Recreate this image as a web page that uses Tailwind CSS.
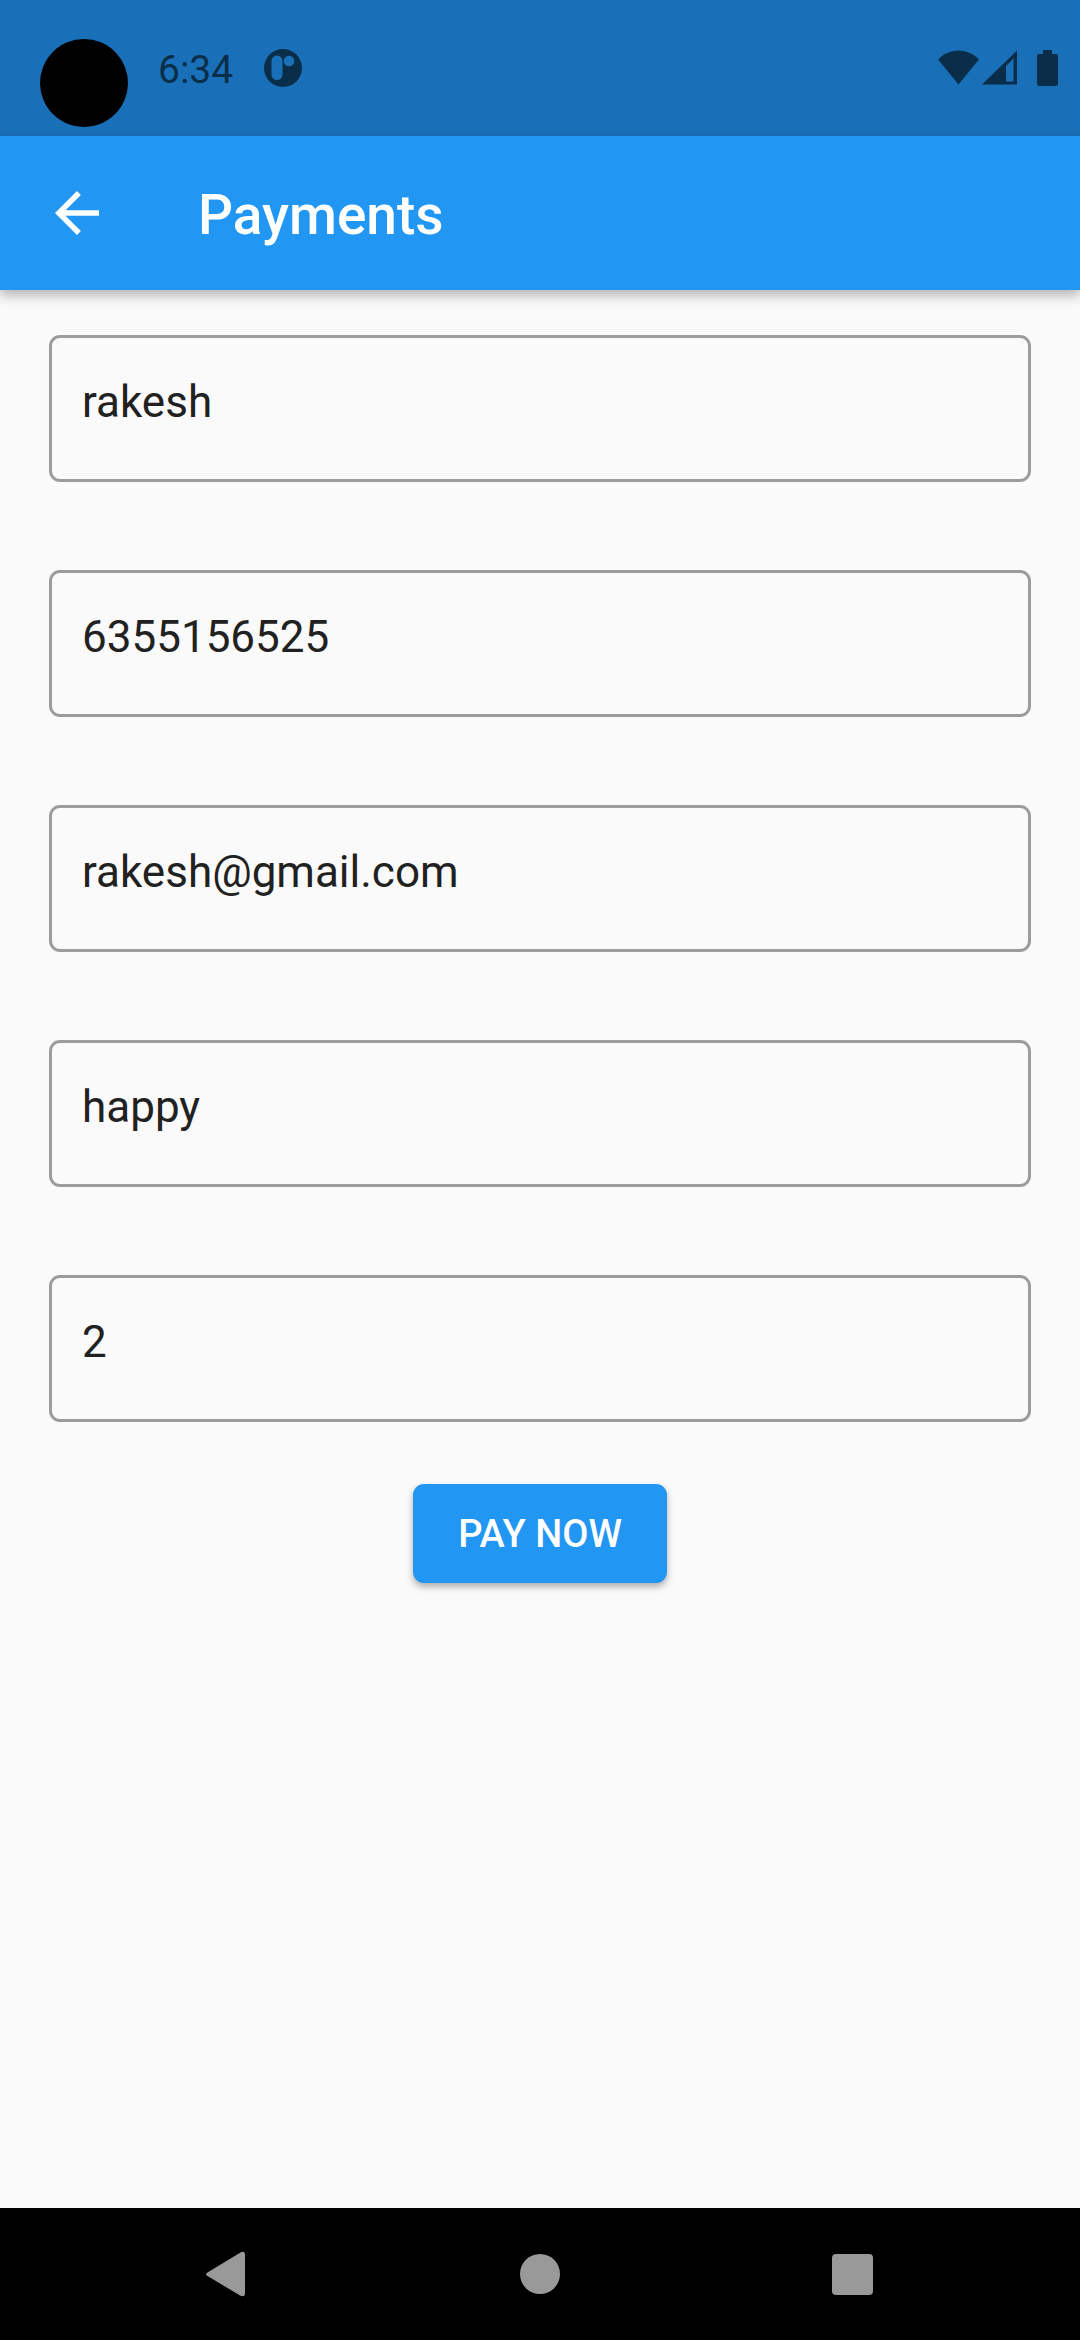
<!DOCTYPE html>
<html lang="en">
<head>
<meta charset="utf-8">
<meta name="viewport" content="width=device-width, initial-scale=1">
<title>Payments</title>
<script src="https://cdn.jsdelivr.net/npm/@tailwindcss/browser@4"></script>
</head>
<body class="flex min-h-screen flex-col bg-[#fafafa] font-['Roboto',sans-serif] text-[#212121]">

  <!-- Status bar -->
  <div class="flex h-[136px] items-center justify-between bg-[#1a70b8] pr-[22px] pl-10 text-[#0a2e4a]">
    <div class="flex items-center">
      <span class="mt-[30px] size-[88px] rounded-full bg-black"></span>
      <span class="ml-[30px] pt-1 text-[39px] leading-[46px]">6:34</span>
      <svg class="ml-[31px] size-[38px]" viewBox="0 0 38 38" aria-hidden="true">
        <circle cx="19" cy="19" r="19" fill="currentColor"/>
        <rect x="7.500" y="6.500" width="11" height="24.500" rx="5.500" fill="#1a70b8"/>
        <circle cx="25" cy="12" r="5.300" fill="#1a70b8"/>
      </svg>
    </div>
    <div class="flex items-center">
      <svg class="h-9 w-[41px]" viewBox="0 0 41 36" fill="currentColor" aria-hidden="true">
        <path d="M20.500 34.500 0 9.500C5 4 12.500 .500 20.500 .500S36 4 41 9.500Z"/>
      </svg>
      <svg class="ml-[3px] h-9 w-[35px]" viewBox="0 0 35 36" fill="currentColor" aria-hidden="true">
        <path fill-rule="evenodd" d="M0 34.500 35 .500V34.500ZM24 16V31.500H31.500V8.500Z"/>
      </svg>
      <svg class="ml-5 h-9 w-[21px]" viewBox="0 0 21 36" fill="currentColor" aria-hidden="true">
        <path d="M6 0H15V4H19Q21 4 21 6V34Q21 36 19 36H2Q0 36 0 34V6Q0 4 2 4H6Z"/>
      </svg>
    </div>
  </div>

  <!-- App bar -->
  <header class="flex h-[154px] items-center gap-[88px] bg-[#2196f3] px-11 text-white shadow-[0_5px_12px_rgba(0,0,0,0.3)]">
    <button type="button" aria-label="Back" class="size-[66px]">
      <svg class="size-[66px]" viewBox="0 0 24 24" fill="currentColor" aria-hidden="true">
        <path d="M20 11H7.830l5.590-5.590L12 4l-8 8 8 8 1.410-1.410L7.830 13H20v-2z"/>
      </svg>
    </button>
    <h1 class="pt-1 text-[55px] leading-[66px] font-medium">Payments</h1>
  </header>

  <main class="flex-1 px-[49px] pt-[45px]">
    <form class="flex flex-col">
      <div class="flex flex-col gap-[88px]">
        <input type="text" aria-label="Name" value="rakesh" class="h-[147px] w-full rounded-[11px] border-3 border-[#9c9c9c] px-[30px] pb-3.5 text-[44px]">
        <input type="tel" aria-label="Phone" value="6355156525" class="h-[147px] w-full rounded-[11px] border-3 border-[#9c9c9c] px-[30px] pb-3.5 text-[44px]">
        <input type="email" aria-label="Email" value="rakesh@gmail.com" class="h-[147px] w-full rounded-[11px] border-3 border-[#9c9c9c] px-[30px] pb-3.5 text-[44px]">
        <input type="text" aria-label="Description" value="happy" class="h-[147px] w-full rounded-[11px] border-3 border-[#9c9c9c] px-[30px] pb-3.5 text-[44px]">
        <input type="text" inputmode="numeric" aria-label="Amount" value="2" class="h-[147px] w-full rounded-[11px] border-3 border-[#9c9c9c] px-[30px] pb-3.5 text-[44px]">
      </div>
      <button type="button" class="mt-[62px] h-[99px] min-w-[254px] self-center rounded-[11px] bg-[#2196f3] px-11 pt-px text-[38px] font-medium text-white shadow-[0_4px_7px_rgba(0,0,0,0.3)]">PAY NOW</button>
    </form>
  </main>

  <!-- System navigation -->
  <nav aria-label="System" class="grid h-[132px] grid-cols-3 bg-black px-[72px] text-[#999999]">
    <button type="button" aria-label="Back" class="flex items-center justify-center">
      <svg class="size-[66px]" viewBox="0 0 66 66" fill="currentColor" aria-hidden="true">
        <path d="M12.500 31.500 45.500 11.400Q50 9.500 50 14V52Q50 56.500 45.500 54.800L12.500 35Q10 33.200 12.500 31.500Z"/>
      </svg>
    </button>
    <button type="button" aria-label="Home" class="flex items-center justify-center">
      <span class="size-10 rounded-full bg-[#999999]"></span>
    </button>
    <button type="button" aria-label="Overview" class="flex items-center justify-center">
      <span class="size-[41px] rounded-[4px] bg-[#999999]"></span>
    </button>
  </nav>
</body>
</html>
